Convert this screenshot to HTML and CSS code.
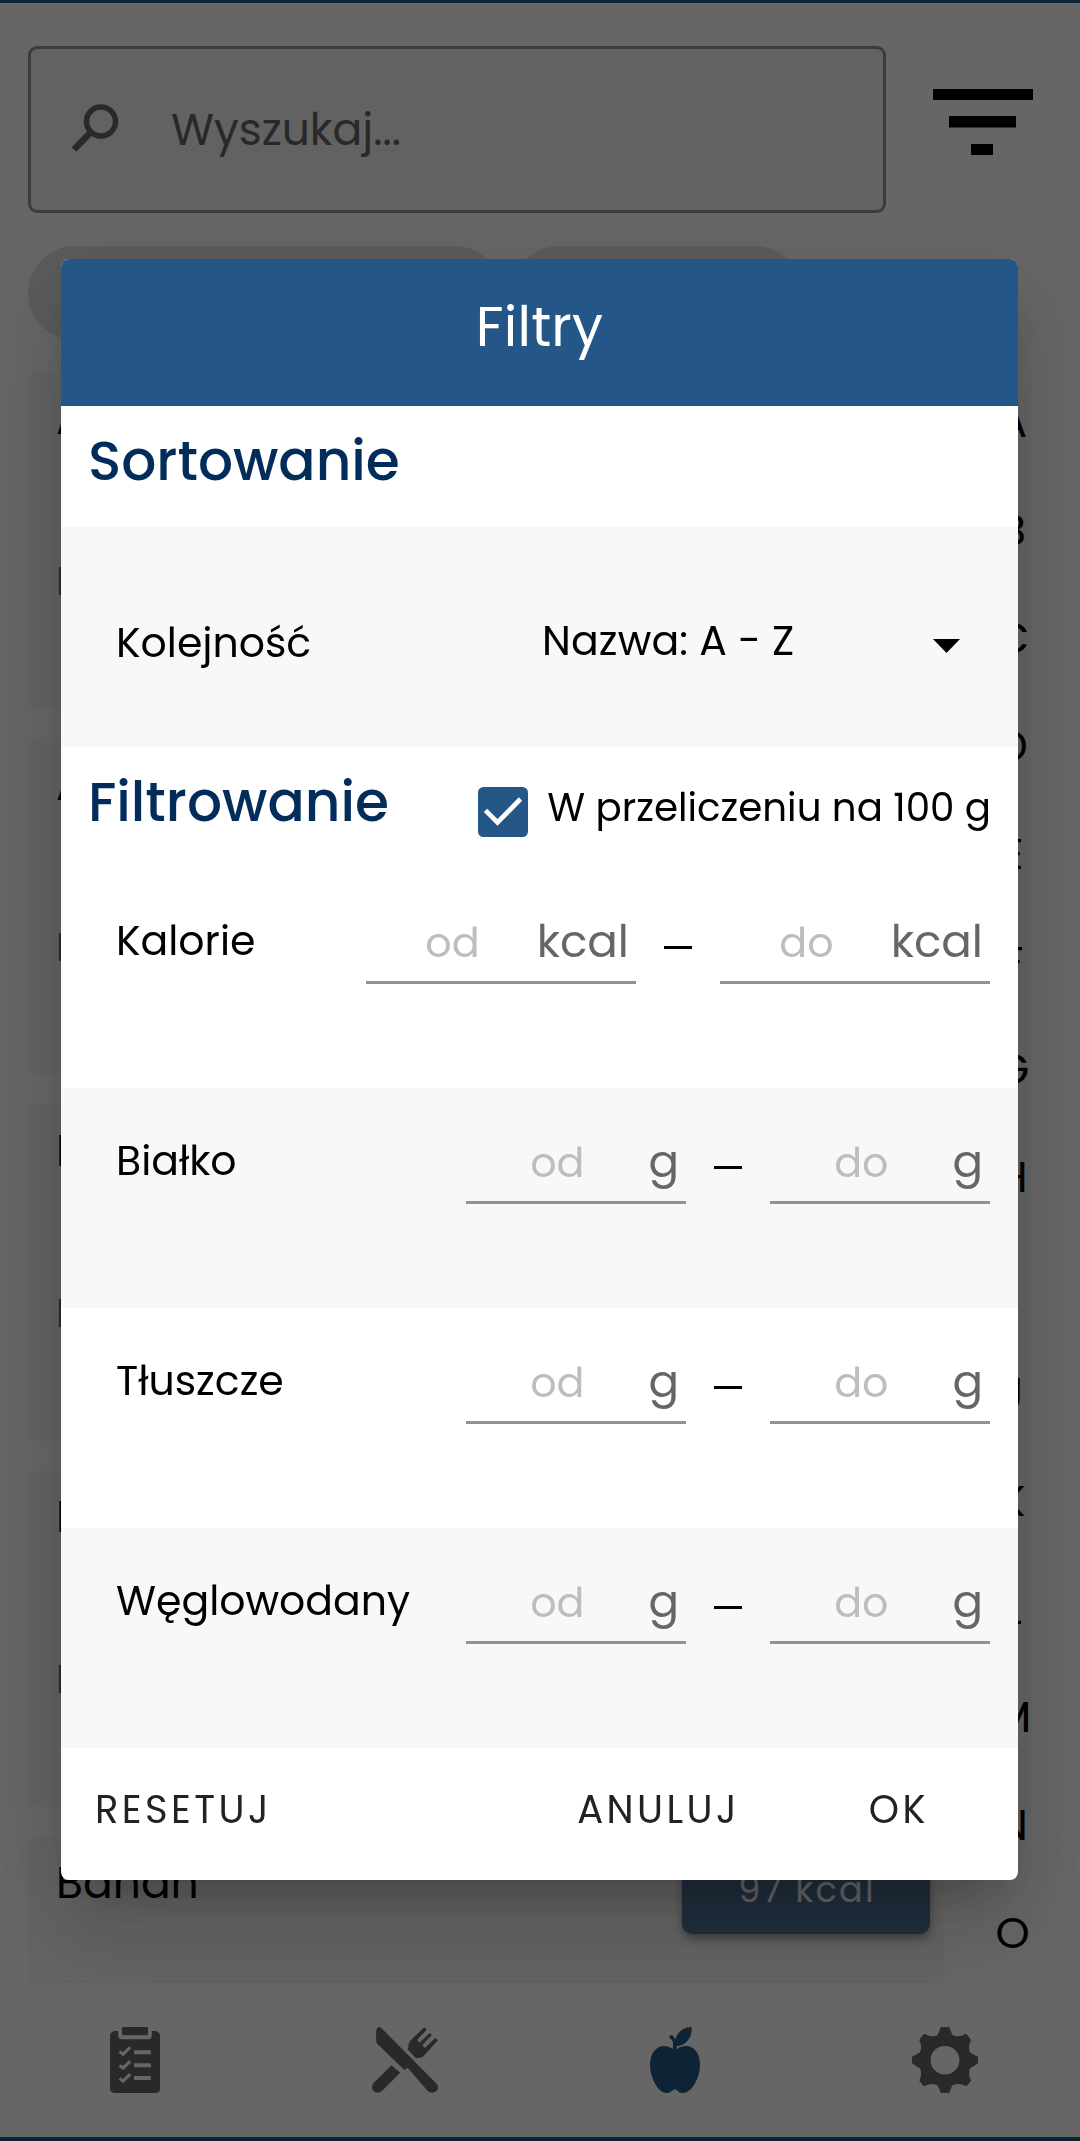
FILE: index.html
```html
<!DOCTYPE html>
<html lang="pl">
<head>
<meta charset="utf-8">
<title>Filtry</title>
<link rel="stylesheet" href="styles.css">
</head>
<body>
<div class="app">
  <div class="status-bar"></div>
  <header class="toolbar">
    <div class="search">
      <svg class="search-icon" viewBox="0 0 48 48"><circle cx="30" cy="17.500" r="14.500" fill="none" stroke="currentColor" stroke-width="5.500"/><path d="M20 28 3 45.500" stroke="currentColor" stroke-width="6.500"/></svg>
      <span class="search-text">Wyszukaj...</span>
    </div>
    <svg class="filter-icon" viewBox="0 0 100 66"><path d="M0 0h100v11H0zM16 27h67v11.500H16zM38 55h22v11H38z"/></svg>
  </header>
  <div class="chips"><span class="chip chip-wide"></span><span class="chip"></span></div>
  <main class="content">
    <div class="list">
      <article class="card"><div class="card-title">A</div><div class="card-sub">P</div></article>
      <article class="card"><div class="card-title">A</div><div class="card-sub">P</div></article>
      <article class="card"><div class="card-title">B</div><div class="card-sub">P</div></article>
      <article class="card"><div class="card-title">B</div><div class="card-sub">P</div></article>
      <article class="card"><div class="card-head"><div class="card-title">Banan</div><div class="energy">97 kcal</div></div></article>
    </div>
    <div class="index">
      <span>A</span><span>B</span><span>C</span><span>D</span><span>E</span><span>F</span><span>G</span><span>H</span><span>I</span><span>J</span><span>K</span><span>L</span><span>M</span><span>N</span><span>O</span>
    </div>
  </main>
  <nav class="nav">
    <svg class="nav-icon narrow" viewBox="319 200 146 199" preserveAspectRatio="none">
      <path fill="currentColor" d="M331 212h12v14q0 11 11 11h76q11 0 11-11v-14h11q13 3 13 14v159q0 14-13 14H332q-13 0-13-14V226q0-11 12-14z"/>
      <rect x="354" y="200" width="76" height="25" rx="4" fill="currentColor"/>
      <g class="cut" fill="none"><path stroke-width="9" d="m347 274 10 8 21-21M347 316l10 8 21-21M347 355l10 8 21-21"/><path stroke-width="12" d="M389 276h49M389 315h49M389 354h49"/></g>
    </svg>
    <svg class="nav-icon" viewBox="1080 200 192 199" preserveAspectRatio="none" fill="currentColor">
      <path d="M1101 200q3 0 7 4l160 167q8 11 0 22-13 11-26 0l-58-70-10 7-78-79q-4-5-4-13v-25q2-13 9-13z"/>
      <path d="m1137 315 25 23-53 55q-11 10-24 1-10-12 0-26z"/>
      <path d="m1232 201 7 7-28 31 8 8 29-29 6 6-28 31 8 8 30-30 8 7-43 49q-7 5-16 4l-4 2-26-28 3-5q-2-12 6-21z"/>
    </svg>
    <svg class="nav-icon narrow active" viewBox="319 200 146 199" preserveAspectRatio="none" fill="currentColor">
      <path d="M386 267v-21q-1-4-5-9-8-4-5-10 7-6 12 2l4 9q7-22 24-32 11-6 25-6 1 29-16 45-11 12-28 12v10q8-7 20-9 20-3 34 12 14 15 14 44 0 38-24 70-12 15-28 15-8 0-13-6-9-10-17 0-6 6-15 6-14 0-26-15-23-32-23-70 0-30 15-45 14-14 32-11 12 2 20 9z"/>
    </svg>
    <svg class="nav-icon" viewBox="1080 200 192 199" preserveAspectRatio="none" fill="currentColor" fill-rule="evenodd">
      <path d="M1164 200h24l8 20q2 7 9 7 17 3 29-6l5 1 12 15v5q-7 12-4 28 0 7 7 10l18 10v20l-18 11q-7 3-7 9-3 16 4 28v5l-12 15-5-1q-12-7-29-4-7 0-9 6l-8 20h-24l-8-20q-2-6-9-6-16-3-29 4l-5 1-11-15v-5q7-12 3-28 0-6-7-9l-18-11v-20l18-10q7-3 7-10 4-16-3-28v-5l11-15 5-1q13 9 29 6 7 0 9-7zM1134 300a42 43 0 1 0 84 0a42 43 0 1 0-84 0z"/>
    </svg>
  </nav>
  <div class="bottom-bar"></div>
</div>

<div class="overlay">
  <section class="dialog">
    <h1 class="dialog-title">Filtry</h1>
    <div class="section-head"><h2 class="heading">Sortowanie</h2></div>
    <div class="row shaded sort-row">
      <span class="label">Kolejność</span>
      <span class="value">Nazwa: A - Z</span>
      <svg class="arrow" viewBox="0 0 27 14"><path d="M0 0h27L13.500 14z"/></svg>
    </div>
    <div class="section-head">
      <h2 class="heading">Filtrowanie</h2>
      <label class="per100">
        <svg class="checkbox" viewBox="0 0 50 50"><rect width="50" height="50" rx="5.500" fill="#245787"/><path d="M7.500 23.300 19.500 35.500 42.500 12" fill="none" stroke="#fff" stroke-width="4.700"/></svg>
        <span class="per100-text">W przeliczeniu na 100 g</span>
      </label>
    </div>
    <div class="row wide">
      <span class="label">Kalorie</span>
      <div class="field"><span class="hint">od</span><span class="unit">kcal</span></div><i class="dash"></i><div class="field"><span class="hint">do</span><span class="unit">kcal</span></div>
    </div>
    <div class="row shaded">
      <span class="label">Białko</span>
      <div class="field"><span class="hint">od</span><span class="unit">g</span></div><i class="dash"></i><div class="field"><span class="hint">do</span><span class="unit">g</span></div>
    </div>
    <div class="row">
      <span class="label">Tłuszcze</span>
      <div class="field"><span class="hint">od</span><span class="unit">g</span></div><i class="dash"></i><div class="field"><span class="hint">do</span><span class="unit">g</span></div>
    </div>
    <div class="row shaded">
      <span class="label">Węglowodany</span>
      <div class="field"><span class="hint">od</span><span class="unit">g</span></div><i class="dash"></i><div class="field"><span class="hint">do</span><span class="unit">g</span></div>
    </div>
    <footer class="actions">
      <span class="action">RESETUJ</span>
      <span class="action cancel">ANULUJ</span>
      <span class="action ok">OK</span>
    </footer>
  </section>
</div>
</body>
</html>
```
FILE: styles.css
```css
* { box-sizing: border-box; }
body {
  margin: 0;
  font-family: Poppins, Inter, "Open Sans", sans-serif;
  color: #000;
  background: #fff;
}
h1, h2 { margin: 0; }
svg { display: block; flex: none; }

/* Page behind the dialog */
.app {
  height: 2141px;
  display: flex;
  flex-direction: column;
  overflow: hidden;
}
.status-bar { height: 3px; background: #245787; flex: none; }
.toolbar { display: flex; padding: 43px 0 0 28px; flex: none; }
.search {
  width: 858px;
  height: 167px;
  border: 3px solid #979797;
  border-radius: 9px;
  background: #f5f5f5;
  display: flex;
  padding-left: 40px;
  color: #666;
}
.search-icon { width: 48px; height: 48px; margin-top: 55px; }
.search-text { margin-left: 52px; margin-top: 51px; font-size: 44px; line-height: 60px; }
.filter-icon { width: 100px; height: 66px; margin: 43px 0 0 47px; }
.chips { display: flex; gap: 10px; padding: 33px 0 0 28px; flex: none; }
.chip { width: 290px; height: 94px; border-radius: 47px; background: #e2e2e2; }
.chip-wide { width: 474px; }
.content { flex: 1; min-height: 0; overflow: hidden; display: flex; }
.list {
  width: 945px;
  padding: 32px 0 0 28px;
  display: flex;
  flex-direction: column;
  gap: 29px;
}
.card {
  flex: none;
  height: 337px;
  padding: 17px 15px 0 29px;
  background: #f8f8f8;
  border-radius: 10px;
}
.card-head { display: flex; justify-content: space-between; }
.card-title { font-size: 44px; line-height: 60px; margin-left: -1px; }
.card-sub { margin-top: 108px; margin-left: -1px; font-size: 38.5px; line-height: 50px; color: #666; }
.energy {
  width: 248px;
  height: 92px;
  margin-top: -11px;
  padding: 1px 0 0 2px;
  border-radius: 10px;
  background: #4f7399;
  box-shadow: 0 5px 10px rgba(0, 0, 0, .35);
  color: #fff;
  font-size: 35px;
  letter-spacing: 2.2px;
  line-height: 93px;
  text-align: center;
}
.index {
  width: 135px;
  padding-top: 28px;
  display: flex;
  flex-direction: column;
  align-items: center;
  font-size: 43.5px;
  line-height: 107.9px;
}
.nav {
  flex: none;
  height: 154px;
  display: grid;
  grid-template-columns: repeat(4, 1fr);
  justify-items: center;
  padding-top: 44px;
  background: #fff;
  color: #666;
  box-shadow: 0 -1px 4px rgba(0, 0, 0, .05);
}
.nav-icon { width: 66px; height: 66px; }
.nav-icon.narrow { width: 50px; }
.nav-icon.active { color: #245787; }
.cut { stroke: #fff; }
.bottom-bar { height: 4px; background: #245787; flex: none; }

/* Dialog */
.overlay {
  position: fixed;
  inset: 0;
  display: flex;
  justify-content: center;
  align-items: flex-start;
  padding: 259px 1px 0 0;
  background: rgba(0, 0, 0, .6);
}
.dialog {
  width: 957px;
  height: 1621px;
  background: #fff;
  border-radius: 8px;
  overflow: hidden;
  box-shadow: 0 29px 40px -19px rgba(0, 0, 0, .2), 0 50px 90px 8px rgba(0, 0, 0, .1), 0 24px 100px 12px rgba(0, 0, 0, .08);
}
.dialog-title {
  height: 147px;
  background: #245787;
  color: #fff;
  font-size: 55px;
  font-weight: 400;
  line-height: 136px;
  letter-spacing: .2px;
  text-align: center;
}
.section-head {
  height: 121px;
  display: flex;
  justify-content: space-between;
  align-items: flex-start;
  padding: 15px 27px 0;
}
.heading { font-size: 55px; font-weight: 500; line-height: 80px; color: #022d5a; }
.per100 { display: flex; align-items: flex-start; gap: 19px; padding-top: 16px; }
.checkbox { width: 50px; height: 50px; margin-top: 9px; }
.per100-text { font-size: 38.8px; line-height: 60px; }
.row {
  height: 220px;
  display: flex;
  align-items: flex-start;
  padding: 43px 28px 0 55px;
}
.shaded { background: #f8f8f8; }
.label { flex: 1; font-size: 41px; line-height: 60px; white-space: nowrap; }
.field {
  width: 220px;
  height: 73px;
  flex: none;
  border-bottom: 3px solid #929292;
  display: flex;
  justify-content: flex-end;
  padding-right: 7px;
  line-height: 62px;
}
.wide .field { width: 270px; }
.hint { font-size: 41.25px; color: #bdbdbd; margin-right: 64px; line-height: 64px; }
.wide .hint { margin-right: 57px; }
.unit { font-size: 45.2px; color: #666; }
.dash { width: 28px; height: 3px; margin: 35px 28px 0; background: #000; flex: none; }
.sort-row { padding: 86px 0 0 55px; }
.sort-row .label { flex: none; width: 426px; }
.value { width: 391px; margin-top: -2px; font-size: 41px; line-height: 60px; letter-spacing: .15px; }
.arrow { width: 27px; height: 14px; margin-top: 26px; }
.actions { display: flex; padding: 32px 89px 0 34px; height: 132px; }
.action { font-size: 38.5px; line-height: 60px; color: #222; letter-spacing: 3.44px; }
.cancel { margin-left: auto; }
.ok { margin-left: 129px; }
```
